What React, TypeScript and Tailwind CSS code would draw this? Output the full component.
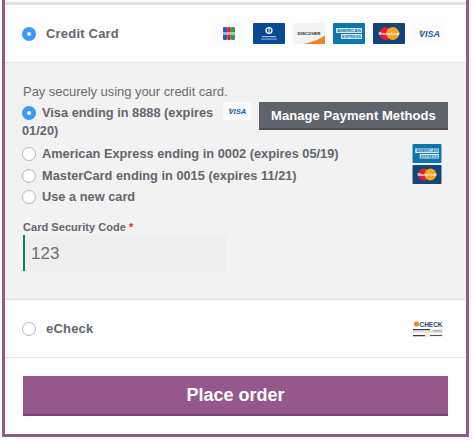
import React from 'react';

const Radio = ({ checked }: { checked?: boolean }) =>
  checked ? (
    <span className="flex h-[14px] w-[14px] shrink-0 items-center justify-center rounded-full bg-[#3b99fc]">
      <span className="h-[4px] w-[4px] rounded-full bg-white" />
    </span>
  ) : (
    <span className="h-[14px] w-[14px] shrink-0 rounded-full border border-[#b4b9be] bg-white" />
  );

const logoFont = '"Liberation Sans", sans-serif';

const Jcb = () => (
  <svg viewBox="0 0 32 21" className="h-full w-full">
    <rect width="32" height="21" fill="#fbfbfb" />
    <rect x="10" y="4" width="4" height="13" rx="1" fill="#1f5fb0" />
    <rect x="14.2" y="4" width="3.6" height="13" rx="1" fill="#d8262f" />
    <rect x="18" y="4" width="4" height="13" rx="1" fill="#27a04a" />
    <rect x="10" y="9" width="12" height="3" fill="#e8e8e8" opacity="0.6" />
  </svg>
);

const Diners = () => (
  <svg viewBox="0 0 32 21" className="h-full w-full">
    <rect width="32" height="21" rx="1" fill="#0a4a92" />
    <circle cx="16" cy="7.5" r="3.6" fill="#f2f6fb" />
    <circle cx="16" cy="7.5" r="2.2" fill="#0a4a92" />
    <rect x="15.5" y="4.5" width="1" height="6" fill="#f2f6fb" />
    <rect x="9" y="13" width="14" height="1.2" fill="#9fbbdc" />
    <rect x="8" y="15.5" width="16" height="1.2" fill="#7fa3cf" />
  </svg>
);

const Discover = () => (
  <svg viewBox="0 0 32 21" className="h-full w-full">
    <rect width="32" height="21" rx="1" fill="#f3f3f3" />
    <path d="M10 21 C20 19 28 16 32 12 V21 Z" fill="#f58220" />
    <text x="16" y="12" textAnchor="middle" fontSize="4.4" fontWeight="700" fill="#222" fontFamily={logoFont}>DISCOVER</text>
  </svg>
);

const Amex = () => (
  <svg viewBox="0 0 32 21" className="h-full w-full">
    <rect width="32" height="21" rx="1" fill="#0a78ae" />
    <rect x="3" y="5" width="26" height="5" fill="#d8e9f3" />
    <text x="16" y="9" textAnchor="middle" fontSize="4" fontWeight="700" fill="#0a78ae" textLength="24" lengthAdjust="spacingAndGlyphs" fontFamily={logoFont}>AMERICAN</text>
    <rect x="8" y="11" width="21" height="5" fill="#d8e9f3" />
    <text x="18.5" y="15" textAnchor="middle" fontSize="4" fontWeight="700" fill="#0a78ae" textLength="19" lengthAdjust="spacingAndGlyphs" fontFamily={logoFont}>EXPRESS</text>
  </svg>
);

const MasterCard = () => (
  <svg viewBox="0 0 32 21" className="h-full w-full">
    <rect width="32" height="21" rx="1" fill="#12457a" />
    <circle cx="12.7" cy="10.5" r="6.5" fill="#e2222f" />
    <circle cx="19.8" cy="10.5" r="6.5" fill="#f5a623" />
    <text x="16" y="12" textAnchor="middle" fontSize="3.8" fontWeight="700" fill="#fff" fontFamily={logoFont}>MasterCard</text>
  </svg>
);

const Visa = () => (
  <svg viewBox="0 0 32 21" className="h-full w-full">
    <rect width="32" height="21" fill="#fbfbfb" />
    <path d="M6 7.5 L10 7.5 L11 11 Z" fill="#f2a33a" />
    <text x="16.5" y="14" textAnchor="middle" fontSize="9" fontWeight="700" fontStyle="italic" fill="#1a5fa0" fontFamily={logoFont}>VISA</text>
  </svg>
);

const ECheck = () => (
  <svg viewBox="0 0 32 21" className="h-full w-full">
    <rect width="32" height="21" fill="#fdfdfd" />
    <circle cx="4.5" cy="6" r="2.6" fill="#f08a24" />
    <text x="19" y="8.5" textAnchor="middle" fontSize="7" fontWeight="700" fill="#1f4a75" textLength="23" lengthAdjust="spacingAndGlyphs" fontFamily={logoFont}>CHECK</text>
    <rect x="1" y="11" width="30" height="4" fill="#f9e0c8" />
    <rect x="1" y="11" width="17" height="1.2" fill="#1f4a75" />
    <rect x="21" y="12" width="9" height="2" fill="#b8c2cc" />
    <rect x="1" y="16.5" width="30" height="2" fill="#f9e0c8" />
    <rect x="1" y="17" width="12" height="1.2" fill="#1f4a75" />
    <rect x="18" y="17" width="12" height="1" fill="#44586c" />
  </svg>
);

const headerCards = [Jcb, Diners, Discover, Amex, MasterCard, Visa];

export default function App() {
  return (
    <div className="h-[443px] w-[474px] bg-[#fdfdfd] font-['Liberation_Sans',sans-serif] text-[#63676d]">
      <div className="ml-[2px] h-[437px] w-[467px] border-x-[3px] border-b-[3px] border-[#96588a] pt-[2px]">
        <div className="h-[3px] bg-[#e2e2e2]" />

        <div className="flex h-[58px] items-center border-b border-dotted border-[#d3ced2] pl-[17px] pr-[21px]">
          <Radio checked />
          <span className="ml-[10px] text-[13px] font-bold tracking-[0.2px]">Credit Card</span>
          <div className="ml-auto flex gap-[8px]">
            {headerCards.map((Card, i) => (
              <span key={i} className="h-[21px] w-[32px]">
                <Card />
              </span>
            ))}
          </div>
        </div>

        <div className="h-[237px] border-b border-dotted border-[#d3ced2] bg-[#f2f2f2] pl-[18px] pr-[18px] pt-[19px]">
          <p className="text-[13px] leading-[20px] tracking-[-0.04px] text-[#6d6d6d]">Pay securely using your credit card.</p>

          <div className="text-[12.8px] font-bold leading-[18px]">
            <div className="pt-[2px]">
              <button className="float-right -mt-[2px] ml-[7px] h-[28px] w-[189px] border-b-2 border-[#4c5055] bg-[#5f636b] pt-[1px] text-[13px] font-bold tracking-[0.07px] text-white">
                Manage Payment Methods
              </button>
              <span className="float-right -mt-[2px] ml-[4px] h-[18px] w-[30px]">
                <Visa />
              </span>
              <span className="-ml-[1px] mr-[6px] mt-[2px] inline-flex h-[14px] w-[14px] align-top">
                <Radio checked />
              </span>
              Visa ending in 8888 (expires <span className="-ml-[1px]">01/20)</span>
            </div>

            <div className="-ml-[1px] mt-[3px] flex h-[22px] items-center gap-[6px]">
              <Radio />
              <span>American Express ending in 0002 (expires 05/19)</span>
              <span className="ml-auto mr-[6px] -mt-[1px] h-[19px] w-[30px]">
                <Amex />
              </span>
            </div>
            <div className="-ml-[1px] flex h-[21px] items-center gap-[6px]">
              <Radio />
              <span>MasterCard ending in 0015 (expires 11/21)</span>
              <span className="ml-auto mr-[6px] -mt-[2px] h-[19px] w-[30px]">
                <MasterCard />
              </span>
            </div>
            <div className="-ml-[1px] flex h-[22px] items-center gap-[6px]">
              <Radio />
              <span>Use a new card</span>
            </div>
          </div>

          <label className="mt-[11px] block text-[11px] font-bold leading-[16px] tracking-[0.05px]">
            Card Security Code <span className="text-[#e2262e]">*</span>
          </label>
          <div className="flex h-[36px] w-[203px] items-center border-l-2 border-[#0f834d] bg-[#eeeeee] pl-[6px] pt-[1px] text-[17px] text-[#6d6d6d]">
            123
          </div>
        </div>

        <div className="flex h-[58px] items-center border-b border-dotted border-[#d3ced2] pl-[17px] pr-[22px]">
          <Radio />
          <span className="ml-[10px] text-[13px] font-bold tracking-[0.2px]">eCheck</span>
          <span className="ml-auto h-[21px] w-[32px]">
            <ECheck />
          </span>
        </div>

        <div className="pl-[18px] pt-[18px]">
          <button className="h-[40px] w-[425px] border-b-2 border-[#77456d] bg-[#96588a] pt-[1px] text-[18px] font-bold text-white">
            Place order
          </button>
        </div>
      </div>
    </div>
  );
}
